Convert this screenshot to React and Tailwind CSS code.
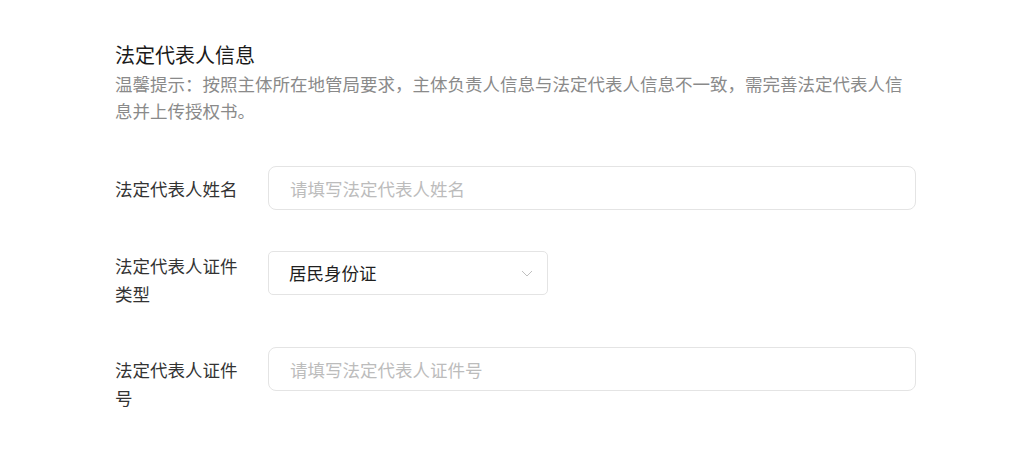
const FONT = { fontFamily: '"Noto Sans CJK SC", "Noto Sans", sans-serif' }

function Chevron() {
  return (
    <svg width="12" height="7" viewBox="0 0 12 7" fill="none" className="shrink-0">
      <path d="M1 1l5 5 5-5" stroke="#c0c0c0" strokeWidth="1" />
    </svg>
  )
}

function Row({ label, offset, children, className }) {
  return (
    <div className={`flex ${className}`}>
      <div className={`w-[130px] shrink-0 mr-[23px] text-[17.5px] leading-[28px] text-[#333333] ${offset}`}>{label}</div>
      {children}
    </div>
  )
}

export default function App() {
  return (
    <div className="w-[1030px] h-[450px] bg-white pl-[115px] pt-[41px]" style={FONT}>
      <div className="w-[801px]">
        <h2 className="text-[20px] leading-[30px] -mt-px text-[#1a1a1a]">法定代表人信息</h2>
        <p className="text-[17.5px] leading-[27px] text-[#8a8a8a]">
          温馨提示：按照主体所在地管局要求，主体负责人信息与法定代表人信息不一致，需完善法定代表人信息并上传授权书。
        </p>

        <Row label="法定代表人姓名" offset="pt-[9px]" className="mt-[42px]">
          <input
            className="flex-1 h-[44px] border border-[#e4e4e4] rounded-lg pl-[21px] text-[17.5px] text-[#222] placeholder:text-[#bcbcbc] outline-none"
            placeholder="请填写法定代表人姓名"
            style={FONT}
          />
        </Row>

        <Row label="法定代表人证件类型" offset="pt-px" className="mt-[41px]">
          <div className="w-[280px] h-[44px] border border-[#e4e4e4] rounded-[5px] pl-[20px] pr-[14px] flex items-center justify-between">
            <span className="text-[17.5px] text-[#1f1f1f]">居民身份证</span>
            <Chevron />
          </div>
        </Row>

        <Row label="法定代表人证件号" offset="pt-[9px]" className="mt-[39px]">
          <input
            className="flex-1 h-[44px] border border-[#e4e4e4] rounded-lg pl-[21px] text-[17.5px] text-[#222] placeholder:text-[#bcbcbc] outline-none"
            placeholder="请填写法定代表人证件号"
            style={FONT}
          />
        </Row>
      </div>
    </div>
  )
}
